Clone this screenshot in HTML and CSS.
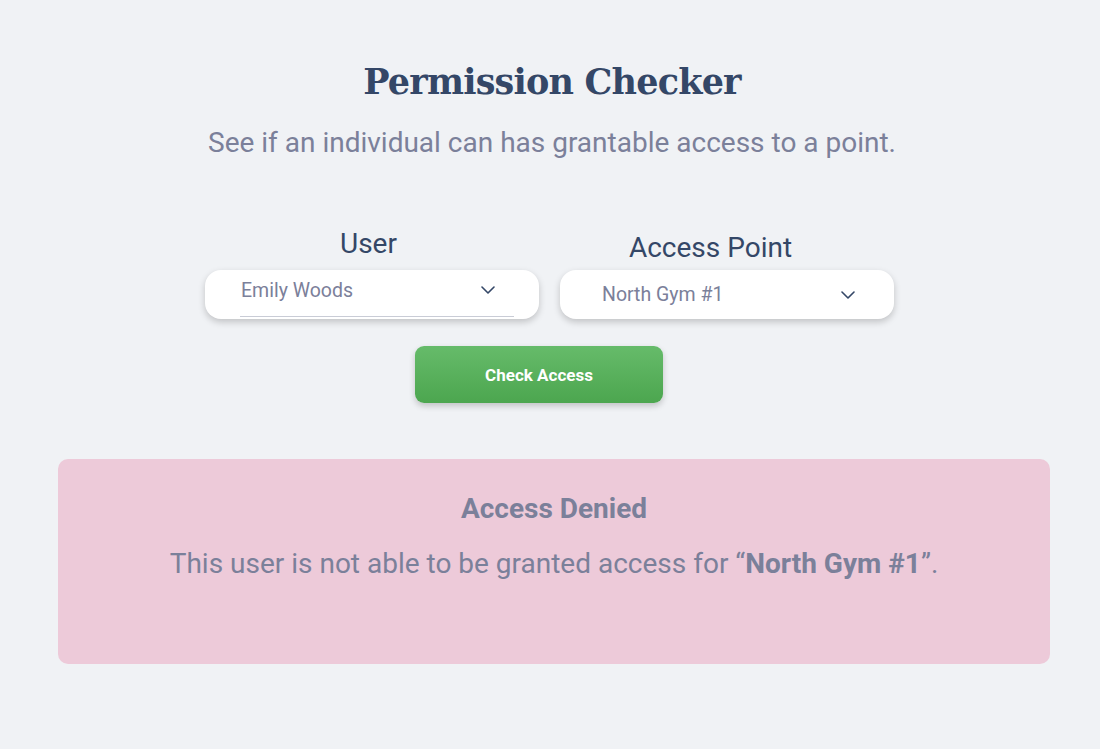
FILE: index.html
```html
<!DOCTYPE html>
<html lang="en">
<head>
    <meta charset="UTF-8">
    <meta name="viewport" content="width=device-width, initial-scale=1.0">
    <title>Permission Checker</title>
    <link rel="stylesheet" href="styles.css">
</head>
<body>

<div class="page">
    <h1 class="title">Permission Checker</h1>
    <p class="subtitle">See if an individual can has grantable access to a point.</p>

    <div class="fields">
        <div class="field field-user">
            <label class="field-label">User</label>
            <div class="picker picker-user">
                <span class="picker-value">Emily Woods</span>
                <svg class="chevron" width="14" height="8" viewBox="0 0 14 8"><path d="M1 1l6 6 6-6" fill="none" stroke="#344767" stroke-width="1.6" stroke-linecap="round" stroke-linejoin="round"/></svg>
            </div>
        </div>
        <div class="field field-point">
            <label class="field-label">Access Point</label>
            <div class="picker picker-point">
                <span class="picker-value">North Gym #1</span>
                <svg class="chevron" width="14" height="8" viewBox="0 0 14 8"><path d="M1 1l6 6 6-6" fill="none" stroke="#344767" stroke-width="1.6" stroke-linecap="round" stroke-linejoin="round"/></svg>
            </div>
        </div>
    </div>

    <button type="button" class="btn-check">Check Access</button>

    <div class="result result-denied">
        <h3 class="result-title">Access Denied</h3>
        <p class="result-text">This user is not able to be granted access for &ldquo;<b>North Gym #1</b>&rdquo;.</p>
    </div>
</div>

</body>
</html>
```

FILE: styles.css
```css
body {
    margin: 0;
    padding: 0;
    background-color: #f0f2f5;
    font-family: Roboto, "Liberation Sans", Arial, sans-serif;
    color: #344767;
}
.page {
    display: flex;
    flex-direction: column;
    align-items: center;
    padding: 58px 0 0 0;
}
.title {
    margin: 0 0 0 4px;
    font-family: "DejaVu Serif", "Liberation Serif", serif;
    font-size: 35px;
    letter-spacing: -0.8px;
    line-height: 48px;
    font-weight: bold;
    color: #344767;
}
.subtitle {
    margin: 19px 0 0 4px;
    font-size: 28px;
    line-height: 36px;
    color: #7b809a;
}
.fields {
    display: flex;
    gap: 21px;
    margin: 65px 1px 0 0;
}
.field {
    display: flex;
    flex-direction: column;
    align-items: center;
    width: 334px;
}
.field-label {
    font-size: 28px;
    line-height: 36px;
    color: #344767;
}
.field-user .field-label {
    margin-right: 7px;
}
.field-point .field-label {
    margin: 4px 33px -4px 0;
}
.picker {
    box-sizing: border-box;
    width: 334px;
    height: 49px;
    margin-top: 8px;
    background: white;
    border-radius: 16px;
    box-shadow: 0 3px 7px rgba(0, 0, 0, 0.2);
    display: flex;
    align-items: center;
    justify-content: space-between;
    font-size: 19.5px;
    color: #7b809a;
}
.picker-user {
    padding: 0 44px 0 36px;
    position: relative;
}
.picker-user .picker-value,
.picker-user .chevron {
    margin-top: -9px;
}
.picker-user::after {
    content: "";
    position: absolute;
    left: 35px;
    right: 25px;
    bottom: 2px;
    border-bottom: 1px solid #c9ccd6;
}
.picker-point {
    padding: 0 39px 0 42px;
}
.btn-check {
    margin: 27px 22px 0 0;
    width: 248px;
    height: 57px;
    border: none;
    border-radius: 9px;
    background: linear-gradient(180deg, #66bb6a, #4ca64f);
    box-shadow: 0 3px 6px rgba(0, 0, 0, 0.2);
    color: white;
    font-family: Roboto, "Liberation Sans", Arial, sans-serif;
    font-size: 17px;
    font-weight: bold;
    padding-top: 2px;
    cursor: pointer;
}
.result {
    box-sizing: border-box;
    width: 992px;
    height: 205px;
    margin: 56px 0 0 8px;
    border-radius: 10px;
    padding-top: 31px;
    text-align: center;
    color: #7b809a;
}
.result-denied {
    background-color: #edcad9;
}
.result-title {
    margin: 0;
    font-size: 28px;
    line-height: 38px;
    font-weight: bold;
}
.result-text {
    margin: 19px 0 0 0;
    font-size: 28px;
    line-height: 34px;
}
```
